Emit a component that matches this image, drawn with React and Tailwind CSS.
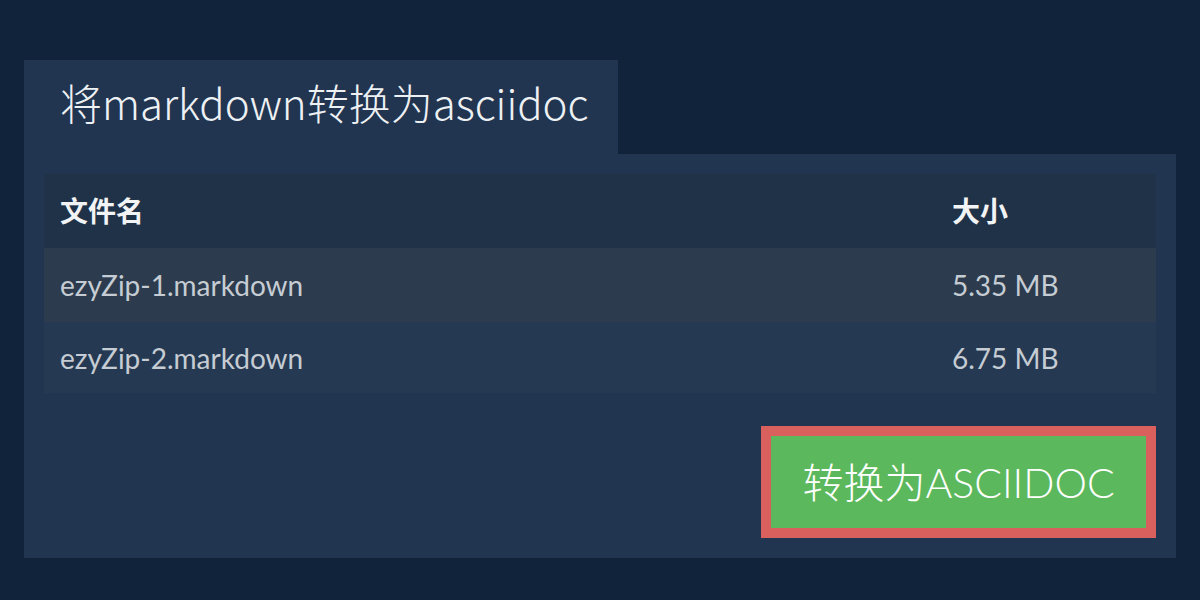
import React from 'react';

const files = [
  { name: 'ezyZip-1.markdown', size: '5.35 MB' },
  { name: 'ezyZip-2.markdown', size: '6.75 MB' },
];

const App = () => {
  return (
    <div className="w-[1200px] h-[600px] bg-[#10233a] px-6 pt-[60px] font-['Lato','Noto_Sans_CJK_SC',sans-serif]">
      {/* Tab title */}
      <div className="w-[594px] h-[94px] bg-[#213550] pl-9 pt-[14px]">
        <h1 className="text-[42px] leading-[56px] font-extralight text-[#eef1f4] font-['Noto_Sans_CJK_SC',sans-serif]">
          将markdown转换为asciidoc
        </h1>
      </div>

      {/* Panel */}
      <div className="h-[404px] bg-[#213550] px-5 pt-5">
        <div className="w-full">
          <div className="flex items-center h-[74px] bg-[#1f3248] px-4 text-[28px] font-bold text-[#f1f3f5]">
            <div className="flex-1">文件名</div>
            <div className="w-[188px]">大小</div>
          </div>
          {files.map((f, i) => (
            <div
              key={f.name}
              className={`flex items-center px-4 text-[28px] text-[#c6ccd3] ${i === 0 ? 'h-[74px] bg-[#2c3c4e]' : 'h-[71px] bg-[#253a52]'}`}
            >
              <div className="flex-1">{f.name}</div>
              <div className="w-[188px]">{f.size}</div>
            </div>
          ))}
        </div>

        <div className="flex justify-end mt-[33px]">
          <button className="w-[395px] h-[112px] bg-[#5cb85c] border-[10px] border-[#d9605c] text-white text-[41px] font-light leading-none">
            转换为ASCIIDOC
          </button>
        </div>
      </div>
    </div>
  );
};

export default App;
